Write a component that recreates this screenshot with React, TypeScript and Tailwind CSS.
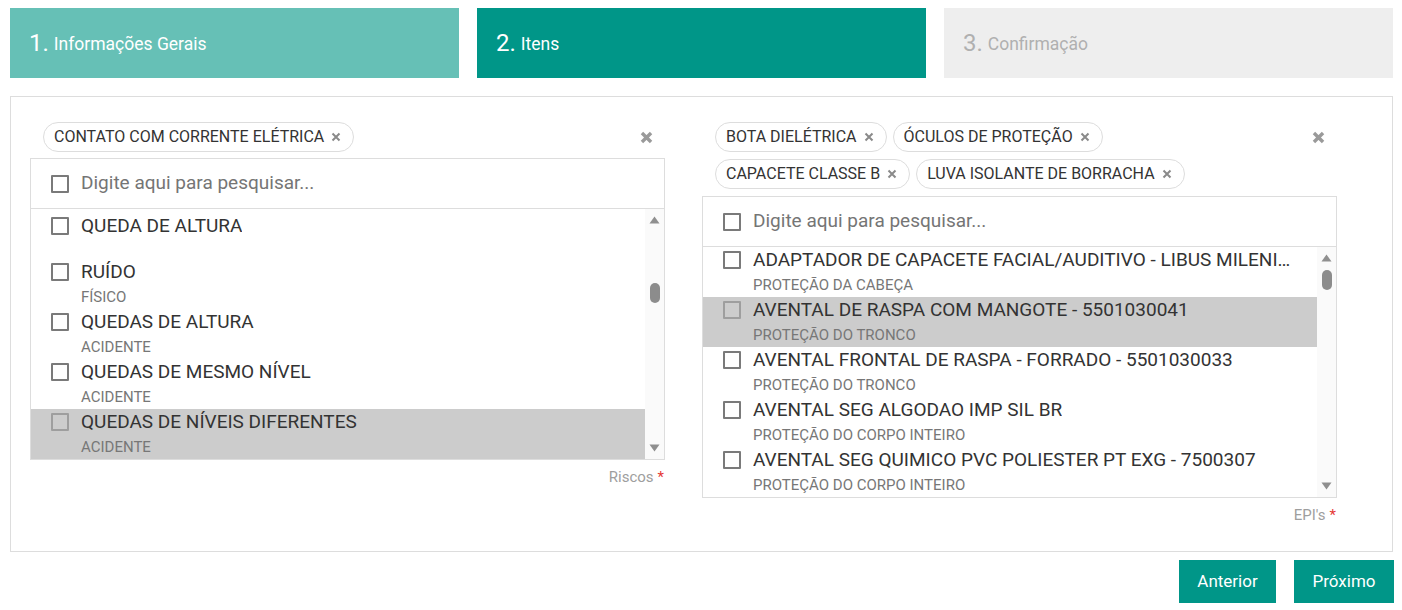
import React from "react";

const font = { fontFamily: "Roboto, 'Liberation Sans', Arial, sans-serif" };

function XIcon({ size, stroke, color }: { size: number; stroke: number; color: string }) {
  return (
    <svg width={size} height={size} viewBox="0 0 10 10" fill="none">
      <path d="M1.5 1.5 L8.5 8.5 M8.5 1.5 L1.5 8.5" stroke={color} strokeWidth={stroke} strokeLinecap="butt" />
    </svg>
  );
}

function Chip({ label }: { label: string }) {
  return (
    <div className="flex h-[30px] items-center gap-[7px] rounded-full border border-[#dddddd] bg-white pl-[10px] pr-[12px] text-[16px] text-[#333333]">
      <span>{label}</span>
      <XIcon size={10} stroke={2} color="#8a8a8a" />
    </div>
  );
}

function Box({ muted }: { muted?: boolean }) {
  return (
    <div
      className={
        "h-[18px] w-[18px] shrink-0 rounded-[1px] border-2 " +
        (muted ? "border-[#9e9e9e]" : "border-[#7a7a7a]")
      }
    />
  );
}

type Item = { main: string; sub?: string; hi?: boolean; first?: boolean };

function Row({ item }: { item: Item }) {
  return (
    <div className={"h-[50px] shrink-0 pl-[20px] pr-[26px] " + (item.hi ? "bg-[#cccccc]" : "")}>
      <div className={"flex h-[26px] items-center gap-[12px] " + (item.first ? "mt-[4px]" : "")}>
        <Box muted={item.hi} />
        <span className="truncate text-[19px] text-[#333333]">{item.main}</span>
      </div>
      {item.sub && (
        <div className="ml-[30px] mt-[3px] text-[15px] leading-[18px] text-[#777777]">{item.sub}</div>
      )}
    </div>
  );
}

function Track({ thumbTop }: { thumbTop: number }) {
  return (
    <div className="flex w-[19px] shrink-0 flex-col items-center bg-[#fafafa]">
      <svg width="11" height="8" viewBox="0 0 11 8" className="mt-[7px] shrink-0">
        <path d="M5.5 0.5 L10.5 7.5 L0.5 7.5 Z" fill="#8f8f8f" />
      </svg>
      <div className="w-[10px] shrink-0 rounded-full bg-[#8c8c8c]" style={{ height: 20, marginTop: thumbTop }} />
      <div className="flex-1" />
      <svg width="11" height="8" viewBox="0 0 11 8" className="mb-[7px] shrink-0">
        <path d="M0.5 0.5 L10.5 0.5 L5.5 7.5 Z" fill="#8f8f8f" />
      </svg>
    </div>
  );
}

function ListBox({ items, thumbTop }: { items: Item[]; thumbTop: number }) {
  return (
    <div className="w-[635px] border border-[#dddddd] bg-white">
      <div className="flex h-[50px] items-center gap-[12px] border-b border-[#dddddd] pl-[20px]">
        <Box />
        <span className="text-[19px] text-[#757575]">Digite aqui para pesquisar...</span>
      </div>
      <div className="flex h-[250px]">
        <div className="flex min-w-0 flex-1 flex-col overflow-hidden">
          {items.map((it, i) => (
            <Row key={i} item={it} />
          ))}
        </div>
        <Track thumbTop={thumbTop} />
      </div>
    </div>
  );
}

function Label({ text }: { text: string }) {
  return (
    <div className="mt-[6px] flex justify-end pr-[1px] text-[15px] text-[#9e9e9e]">
      <span>{text}</span>
      <span className="ml-[4px] text-[#e53935]">*</span>
    </div>
  );
}

export default function App() {
  const left: Item[] = [
    { main: "QUEDA DE ALTURA", first: true },
    { main: "RUÍDO", sub: "FÍSICO" },
    { main: "QUEDAS DE ALTURA", sub: "ACIDENTE" },
    { main: "QUEDAS DE MESMO NÍVEL", sub: "ACIDENTE" },
    { main: "QUEDAS DE NÍVEIS DIFERENTES", sub: "ACIDENTE", hi: true },
  ];
  const right: Item[] = [
    { main: "ADAPTADOR DE CAPACETE FACIAL/AUDITIVO - LIBUS MILENIUM - 5501030098", sub: "PROTEÇÃO DA CABEÇA" },
    { main: "AVENTAL DE RASPA COM MANGOTE - 5501030041", sub: "PROTEÇÃO DO TRONCO", hi: true },
    { main: "AVENTAL FRONTAL DE RASPA - FORRADO - 5501030033", sub: "PROTEÇÃO DO TRONCO" },
    { main: "AVENTAL SEG ALGODAO IMP SIL BR", sub: "PROTEÇÃO DO CORPO INTEIRO" },
    { main: "AVENTAL SEG QUIMICO PVC POLIESTER PT EXG - 7500307", sub: "PROTEÇÃO DO CORPO INTEIRO" },
  ];
  return (
    <div className="min-h-[610px] w-[1402px] bg-white pl-[10px] pr-[9px] pt-[8px]" style={font}>
      <div className="grid grid-cols-3 gap-[18px]">
        <div className="flex h-[70px] items-center bg-[#66c0b6] pl-[19px] text-white">
          <span className="text-[24px]">1.</span>
          <span className="ml-[5px] mt-[3px] text-[17.5px]">Informações Gerais</span>
        </div>
        <div className="flex h-[70px] items-center bg-[#009688] pl-[19px] text-white">
          <span className="text-[24px]">2.</span>
          <span className="ml-[5px] mt-[3px] text-[17.5px]">Itens</span>
        </div>
        <div className="flex h-[70px] items-center bg-[#eeeeee] pl-[19px] text-[#b0b0b0]">
          <span className="text-[24px]">3.</span>
          <span className="ml-[5px] mt-[3px] text-[17.5px]">Confirmação</span>
        </div>
      </div>

      <div className="mt-[18px] flex h-[456px] gap-[37px] border border-[#dddddd] pl-[19px] pt-[25px]">
        <div className="w-[635px]">
          <div className="flex items-start justify-between pl-[13px] pr-[12px]">
            <div className="flex flex-wrap gap-[7px]">
              <Chip label="CONTATO COM CORRENTE ELÉTRICA" />
            </div>
            <div className="mt-[9px]">
              <XIcon size={13} stroke={2.6} color="#9a9a9a" />
            </div>
          </div>
          <div className="mt-[6px]">
            <ListBox items={left} thumbTop={59} />
          </div>
          <Label text="Riscos" />
        </div>

        <div className="w-[635px]">
          <div className="flex items-start justify-between pl-[13px] pr-[12px]">
            <div className="flex w-[500px] flex-wrap gap-x-[6px] gap-y-[7px]">
              <Chip label="BOTA DIELÉTRICA" />
              <Chip label="ÓCULOS DE PROTEÇÃO" />
              <Chip label="CAPACETE CLASSE B" />
              <Chip label="LUVA ISOLANTE DE BORRACHA" />
            </div>
            <div className="mt-[9px]">
              <XIcon size={13} stroke={2.6} color="#9a9a9a" />
            </div>
          </div>
          <div className="mt-[7px]">
            <ListBox items={right} thumbTop={8} />
          </div>
          <Label text="EPI's" />
        </div>
      </div>

      <div className="mt-[8px] flex justify-end gap-[18px]">
        <button className="h-[43px] w-[97px] bg-[#009688] text-[17px] text-white">Anterior</button>
        <button className="-mr-px h-[43px] w-[100px] bg-[#009688] text-[17px] text-white">Próximo</button>
      </div>
    </div>
  );
}
